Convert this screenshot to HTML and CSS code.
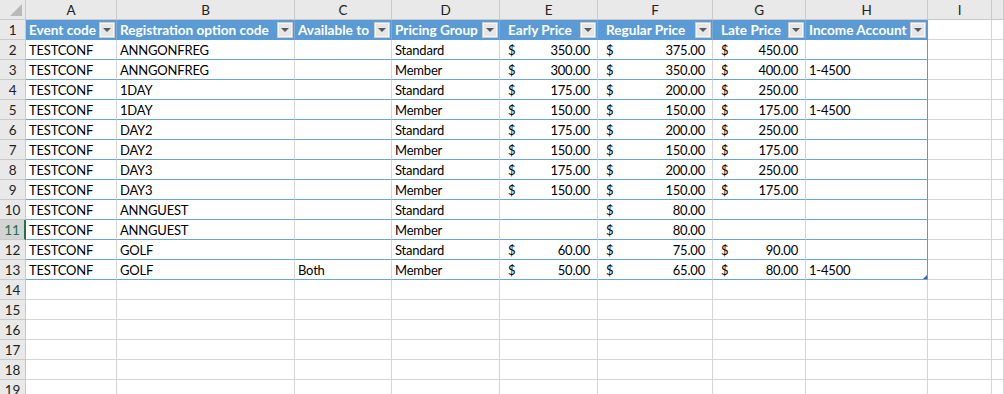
FILE: index.html
```html
<!DOCTYPE html>
<html lang="en">
<head>
  <meta charset="UTF-8">
  <title>Registration Options</title>
  <link rel="stylesheet" href="styles.css">
</head>
<body>
  <div class="sheet" id="sheet">
    <div class="row col-heads">
      <div class="cell corner"></div>
      <div class="cell">A</div>
      <div class="cell">B</div>
      <div class="cell">C</div>
      <div class="cell">D</div>
      <div class="cell">E</div>
      <div class="cell">F</div>
      <div class="cell">G</div>
      <div class="cell">H</div>
      <div class="cell">I</div>
      <div class="cell"></div>
    </div>
  </div>

  <script>
    const headers = [
      { text: "Event code" },
      { text: "Registration option code" },
      { text: "Available to" },
      { text: "Pricing Group" },
      { text: "Early Price", money: true },
      { text: "Regular Price", money: true },
      { text: "Late Price", money: true },
      { text: "Income Account" }
    ];

    // event, option, available, group, early, regular, late, account
    const rows = [
      ["TESTCONF", "ANNGONFREG", "", "Standard", "350.00", "375.00", "450.00", ""],
      ["TESTCONF", "ANNGONFREG", "", "Member", "300.00", "350.00", "400.00", "1-4500"],
      ["TESTCONF", "1DAY", "", "Standard", "175.00", "200.00", "250.00", ""],
      ["TESTCONF", "1DAY", "", "Member", "150.00", "150.00", "175.00", "1-4500"],
      ["TESTCONF", "DAY2", "", "Standard", "175.00", "200.00", "250.00", ""],
      ["TESTCONF", "DAY2", "", "Member", "150.00", "150.00", "175.00", ""],
      ["TESTCONF", "DAY3", "", "Standard", "175.00", "200.00", "250.00", ""],
      ["TESTCONF", "DAY3", "", "Member", "150.00", "150.00", "175.00", ""],
      ["TESTCONF", "ANNGUEST", "", "Standard", "", "80.00", "", ""],
      ["TESTCONF", "ANNGUEST", "", "Member", "", "80.00", "", ""],
      ["TESTCONF", "GOLF", "", "Standard", "60.00", "75.00", "90.00", ""],
      ["TESTCONF", "GOLF", "Both", "Member", "50.00", "65.00", "80.00", "1-4500"]
    ];

    const sheet = document.getElementById("sheet");
    const activeRow = 11;

    function makeRow(num) {
      const row = document.createElement("div");
      row.classList.add("row");
      const head = document.createElement("div");
      head.className = "cell row-head";
      if (num === activeRow) head.classList.add("active");
      head.textContent = num;
      row.appendChild(head);
      return row;
    }

    function addCell(row, cls, text) {
      const cell = document.createElement("div");
      cell.className = "cell " + cls;
      if (text) cell.textContent = text;
      row.appendChild(cell);
      return cell;
    }

    // header row of the table
    const headRow = makeRow(1);
    headers.forEach((h, i) => {
      const cell = addCell(headRow, "th" + (i === 7 ? " last" : ""));
      const label = document.createElement("span");
      label.className = h.money ? "label indent" : "label";
      label.textContent = h.text;
      const btn = document.createElement("span");
      btn.className = "filter";
      cell.appendChild(label);
      cell.appendChild(btn);
    });
    addCell(headRow, "");
    addCell(headRow, "");
    sheet.appendChild(headRow);

    rows.forEach((data, r) => {
      const row = makeRow(r + 2);
      data.forEach((value, i) => {
        let cls = "td" + (i === 7 ? " last" : "");
        if (i >= 4 && i <= 6) {
          const cell = addCell(row, cls + " money");
          const showDollar = value !== "";
          cell.innerHTML = "<span>" + (showDollar ? "$" : "") + "</span><span>" + value + "</span>";
        } else {
          const cell = addCell(row, cls, value);
          if (r === rows.length - 1 && i === 7) cell.classList.add("handle");
        }
      });
      addCell(row, "");
      addCell(row, "");
      sheet.appendChild(row);
    });

    for (let n = 14; n <= 19; n++) {
      const row = makeRow(n);
      for (let i = 0; i < 10; i++) addCell(row, "");
      sheet.appendChild(row);
    }
  </script>
</body>
</html>
```

FILE: styles.css
```css
body {
  margin: 0;
  background: #fff;
  color: #000;
  font-family: 'Lato', 'Noto Sans', sans-serif;
  font-size: 13px;
  letter-spacing: -0.2px;
  overflow: hidden;
}

.row {
  display: grid;
  grid-template-columns: 26px 91px 178px 97px 108px 98px 115px 93px 122px 64px 1fr;
}

.cell {
  height: 20px;
  box-sizing: border-box;
  border-right: 1px solid #d4d4d4;
  border-bottom: 1px solid #d4d4d4;
  padding: 0 3px;
  line-height: 20px;
  white-space: nowrap;
  overflow: hidden;
}

/* column letters and row numbers */
.col-heads .cell {
  background: #e9e9e9;
  border-color: #c9c9c9;
  text-align: center;
  color: #222;
  font-size: 13.5px;
}

.corner {
  position: relative;
}

.corner::after {
  content: "";
  position: absolute;
  right: 3px;
  bottom: 3px;
  border-left: 12px solid transparent;
  border-bottom: 12px solid #b9b9b9;
}

.row-head {
  background: #e9e9e9;
  border-color: #c9c9c9;
  text-align: center;
  color: #222;
  font-size: 13.5px;
  padding: 0;
}

.row-head.active {
  background: #d3d3d3;
  color: #217346;
  border-right: 2px solid #217346;
}

/* table header */
.th {
  display: flex;
  align-items: center;
  background: #5b9bd5;
  color: #fff;
  font-weight: bold;
  font-size: 13.6px;
  letter-spacing: 0;
  border-right-color: #74abdc;
  border-bottom-color: #5b9bd5;
  padding: 0 1px 0 3px;
}

.label {
  flex: 1;
  overflow: hidden;
}

.label.indent {
  padding-left: 5px;
}

.filter {
  position: relative;
  width: 16px;
  height: 16px;
  box-sizing: border-box;
  background: #e6e6e6;
  border: 1px solid #cdcdcd;
  box-shadow: inset 0 0 0 1px #f5f5f5;
  flex-shrink: 0;
}

.filter::after {
  content: "";
  position: absolute;
  left: 3px;
  top: 5px;
  border-left: 4px solid transparent;
  border-right: 4px solid transparent;
  border-top: 4px solid #5a5a5a;
}

.th.last,
.td.last {
  border-right-color: #5b9bd5;
}

.td {
  border-bottom-color: #6ea2d8;
}

.money {
  display: flex;
  justify-content: space-between;
  padding: 0 7px 0 8px;
}

.handle {
  position: relative;
}

.handle::after {
  content: "";
  position: absolute;
  right: 0;
  bottom: 0;
  border-left: 4px solid transparent;
  border-bottom: 4px solid #3f5fb5;
}
```
